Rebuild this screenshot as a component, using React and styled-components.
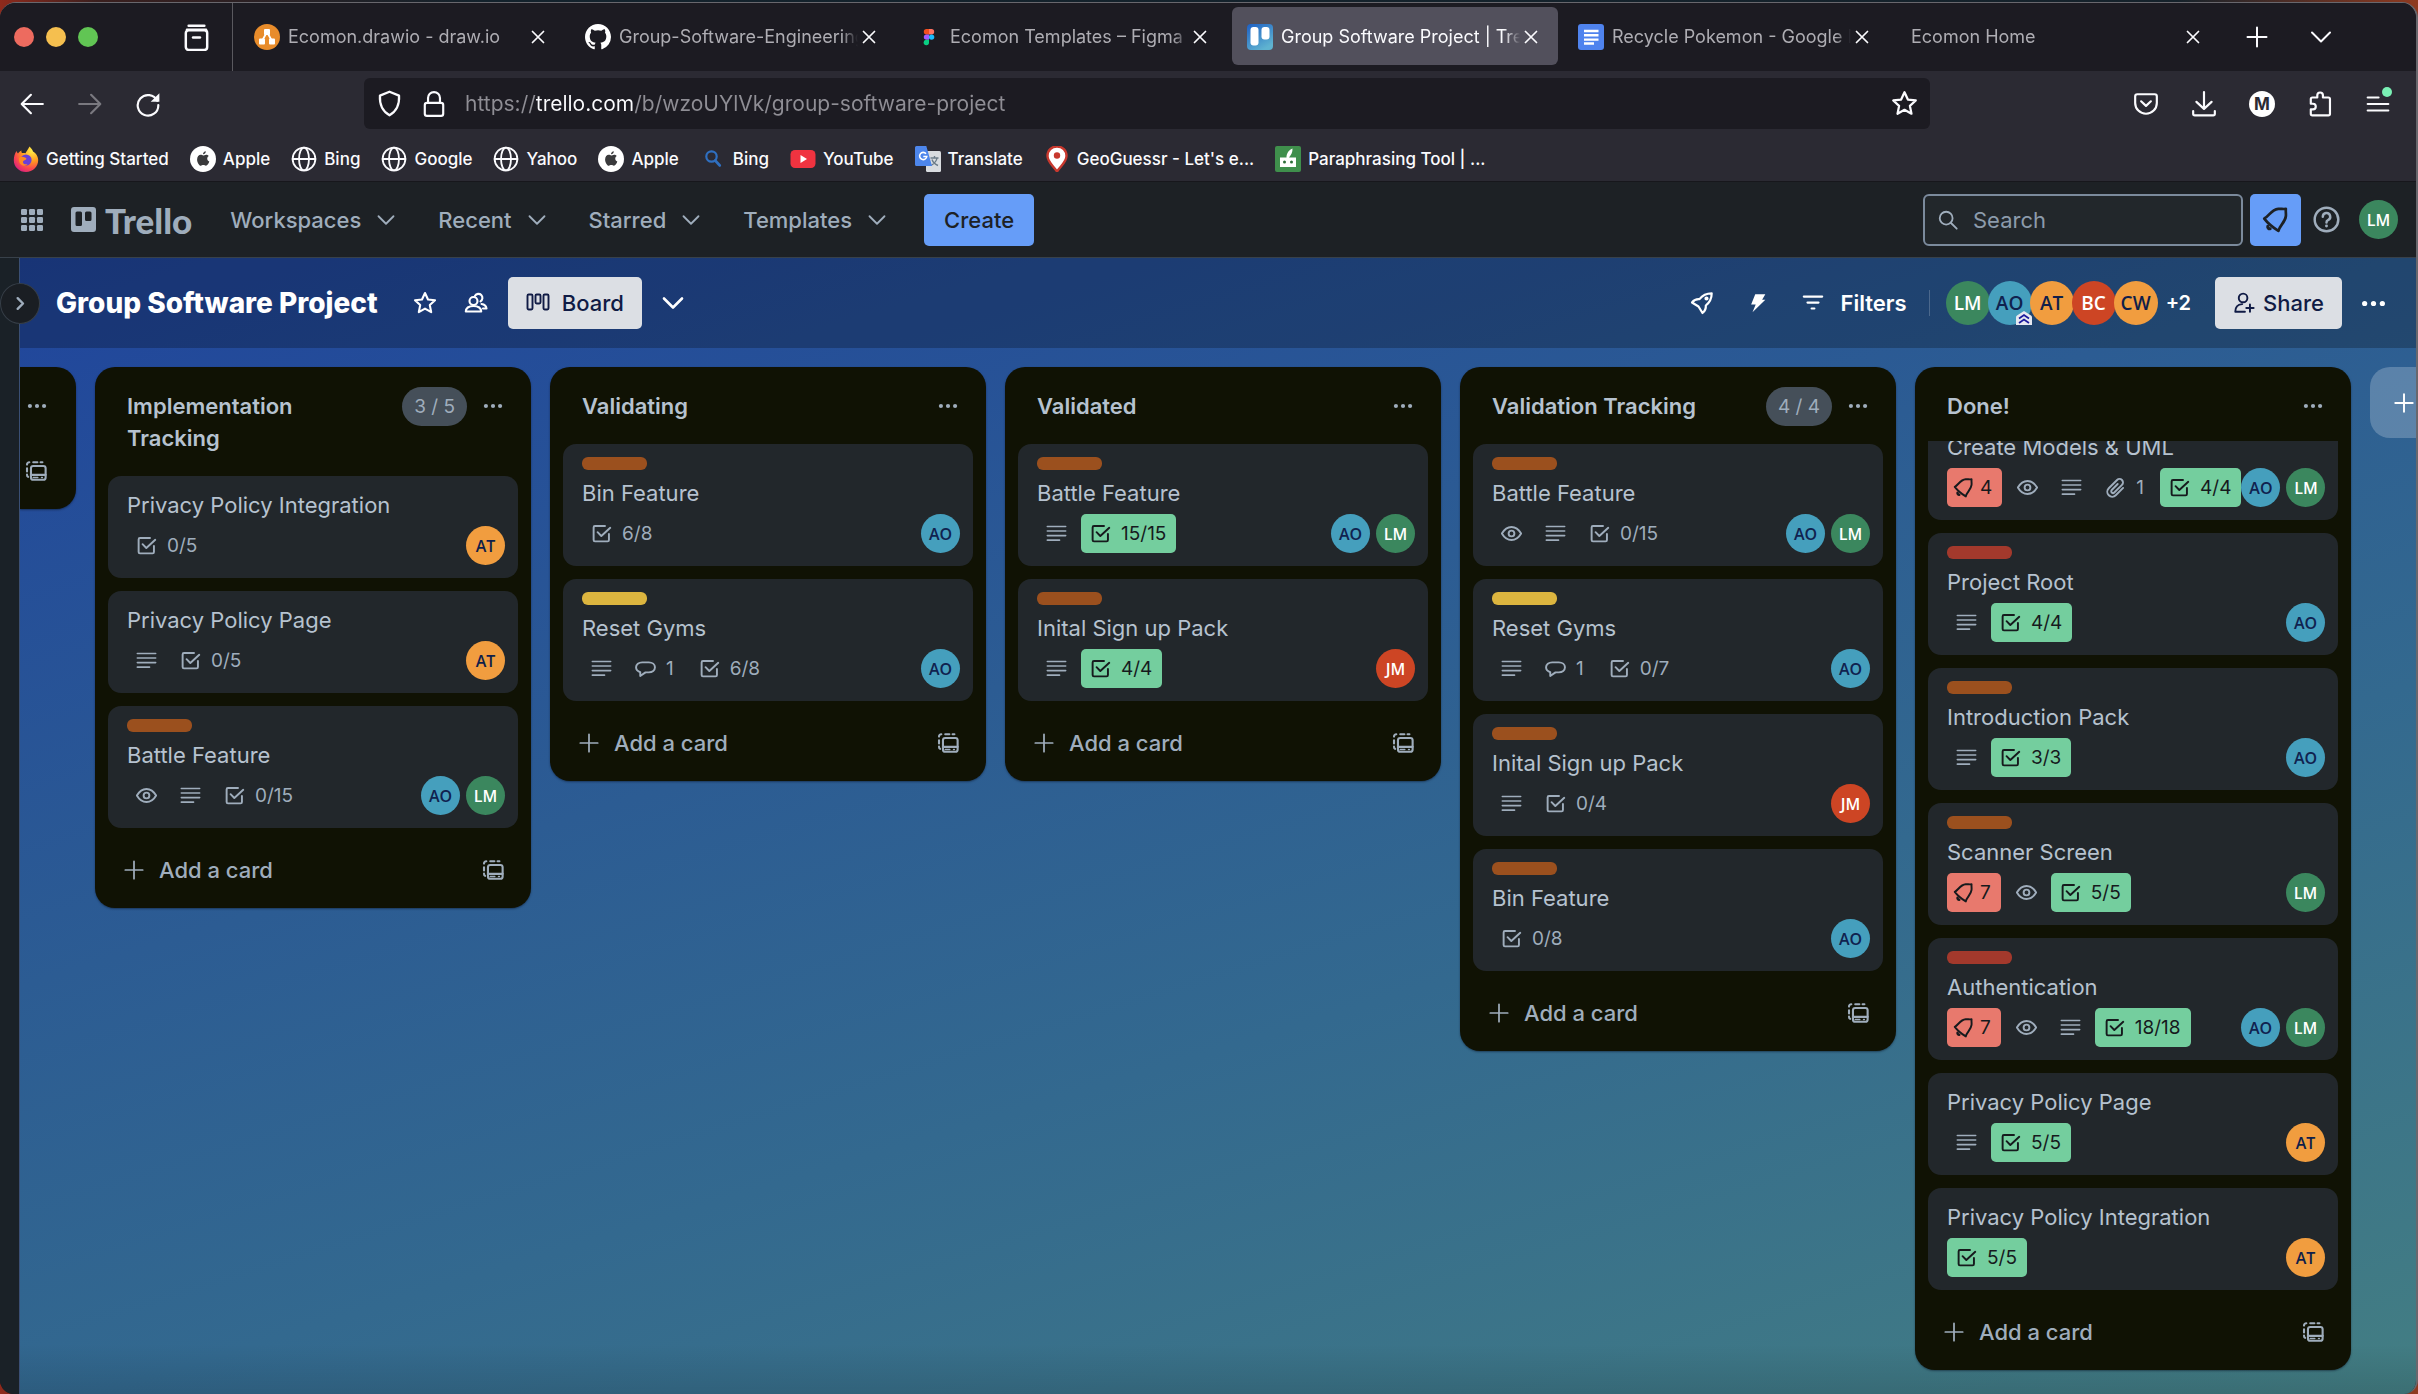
import React, { useLayoutEffect, useRef } from "react";
import styled, { createGlobalStyle, css } from "styled-components";

const GlobalStyle = createGlobalStyle`
  *, *::before, *::after { box-sizing: border-box; }
  body { margin: 0; background: #15222b; }
  button, input { font: inherit; color: inherit; }
  button { background: none; border: 0; padding: 0; cursor: pointer; }
  h1, h2, h3 { margin: 0; }
  svg { display: block; flex: none; }
`;

/* ---------- drawings ---------- */

const shapes = {
  archive: (
    <>
      <path d="M5 1.5h14M3.5 5h17" />
      <rect x="2.5" y="5.5" width="19" height="17.5" rx="2.5" />
      <path d="M9 12h6" strokeWidth="2.4" />
    </>
  ),
  close: <path d="M6 6l12 12M18 6L6 18" />,
  plus: <path d="M12 2.5v19M2.5 12h19" />,
  chevron: <path d="M3 7.5l9 9 9-9" />,
  chevronRight: <path d="M8 4.5l7.5 7.5L8 19.5" />,
  back: <path d="M22 12H3M11 3.5L2.5 12l8.500 8.500" />,
  forward: <path d="M2 12h19M13 3.500L21.500 12 13 20.500" />,
  reload: (
    <>
      <path d="M20.500 9A9.500 9.500 0 1 0 21.500 13" />
      <path d="M22.500 2v8h-8z" fill="currentColor" stroke="none" />
    </>
  ),
  shield: <path d="M12 1.500L20.500 5c.4 7-1.500 13.500-8.500 17.500C5 18.500 3.100 12 3.500 5z" />,
  lock: (
    <>
      <rect x="3.500" y="11" width="17" height="12" rx="2" />
      <path d="M6.500 11V6.500a5.500 5.500 0 0 1 11 0V11" />
    </>
  ),
  star: <path d="M12 2l3 6.500 7 .8-5.200 4.800 1.400 7L12 17.600 5.800 21.100l1.400-7L2 9.300l7-.8z" />,
  pocket: (
    <>
      <path d="M4 3h16a2 2 0 0 1 2 2v6a10 10 0 0 1-20 0V5a2 2 0 0 1 2-2z" />
      <path d="M7.500 9.500l4.500 4.200 4.500-4.200" />
    </>
  ),
  download: <path d="M12 1v15M5 10l7 6.500L19 10M2 18.500V21a1.500 1.500 0 0 0 1.500 1.500h17A1.500 1.500 0 0 0 22 21v-2.500" />,
  puzzle: (
    <path d="M9.500 6V4a2.600 2.600 0 0 1 5.200 0v2h5a1.500 1.500 0 0 1 1.500 1.500V21a1.500 1.500 0 0 1-1.500 1.500H5A1.500 1.500 0 0 1 3.500 21v-4h2a2.600 2.600 0 0 0 0-5.200h-2V7.500A1.500 1.500 0 0 1 5 6z" />
  ),
  menu: <path d="M2.500 6h10M2.500 12h19M2.500 18h19" />,
  search: (
    <>
      <circle cx="10" cy="10" r="7" />
      <path d="M15 15l6.500 6.500" />
    </>
  ),
  bell: (
    <>
      <path d="M2 11.200C6 9.500 8 3.200 14.500 2.600c2.200-.2 4.300.3 6.700 0-.3 2.300.3 4.300 0 6.500C20.600 14.500 15.800 17 14.600 22.200 10.500 19.500 5.500 15.800 2 11.200z" />
      <path d="M5.200 18a1.800 1.800 0 0 0 2 2.200" strokeWidth="2.800" />
    </>
  ),
  help: (
    <>
      <circle cx="12" cy="12" r="10.500" />
      <path d="M8.700 9.500a3.300 3.300 0 1 1 4.600 3.100c-.9.400-1.300.9-1.300 2" />
      <circle cx="12" cy="17.700" r="1.300" fill="currentColor" stroke="none" />
    </>
  ),
  people: (
    <>
      <circle cx="9.500" cy="10" r="4" />
      <path d="M1.800 20.500c.3-4 3.500-5.500 7.700-5.500s7.400 1.500 7.700 5.500z" />
      <path d="M11 4.800a4 4 0 1 1 5.500 5.500M17.500 13c3 .4 4.700 1.800 5 4.500h-3.500" />
    </>
  ),
  board: (
    <>
      <rect x="1.500" y="3.500" width="5" height="15" rx="1.200" />
      <rect x="9.500" y="3.500" width="5" height="9" rx="1.200" />
      <rect x="17.500" y="3.500" width="5" height="15" rx="1.200" />
    </>
  ),
  rocket: (
    <>
      <path d="M8.500 15.500L2 11.500c2-2.500 4.500-3.600 7.500-3.300C12.500 4.300 16.500 2.300 21.700 2.300c0 5.200-2 9.200-5.900 12.200.3 3-.8 5.500-3.300 7.500z" />
      <circle cx="16.500" cy="7.500" r="1" />
    </>
  ),
  bolt: <path d="M9 2.500h11l-3.500 6h3.500L6 22l3.500-8.500H4.500z" fill="currentColor" stroke="none" />,
  filter: <path d="M2 5h20M6 11.500h12M10.500 18h3" />,
  dots: (
    <g fill="currentColor" stroke="none">
      <circle cx="3.500" cy="12" r="2.500" />
      <circle cx="12" cy="12" r="2.500" />
      <circle cx="20.500" cy="12" r="2.500" />
    </g>
  ),
  check: (
    <>
      <path d="M16 3.500H4.500a1.500 1.500 0 0 0-1.500 1.500v14.500A1.500 1.500 0 0 0 4.500 21h14.500a1.500 1.500 0 0 0 1.500-1.500V12.500" />
      <path d="M7.500 10.500l4.300 4.300L22 5.500" />
    </>
  ),
  text: <path d="M1.500 4h21M1.500 9.200h21M1.500 14.400h21M1.500 19.600h14" />,
  eye: (
    <>
      <path d="M1 12C4 6.800 7.500 4.500 12 4.500S20 6.800 23 12c-3 5.200-6.500 7.500-11 7.500S4 17.200 1 12z" />
      <circle cx="12" cy="12" r="3.300" />
    </>
  ),
  comment: (
    <path d="M6 20.500v-4.200C3 15.300 1.200 13.300 1.200 10.700c0-3.400 3-5.700 7-5.700h7.600c4 0 7 2.300 7 5.700s-3 5.700-7 5.700H12z" />
  ),
  clip: (
    <path d="M14.500 8l-6.800 6.800a2 2 0 0 0 2.900 2.900l8.800-8.700a3.900 3.900 0 0 0-5.600-5.600L4.300 12.900a5.600 5.600 0 0 0 8 8l8.400-8.400" />
  ),
  template: (
    <>
      <rect x="6.500" y="6.500" width="16" height="15" rx="2.500" strokeWidth="2.300" />
      <path d="M6.500 16.200h16" strokeWidth="2.300" />
      <path d="M9 19.200h5M18 19.200h1" strokeWidth="1.600" />
      <path d="M9 2.500h4.500M17 2.500h2M2.200 5C2.200 3.500 3.200 2.500 4.700 2.500M2.200 9v3.500M2.200 16c0 1.300.4 2 1.200 2.400" strokeWidth="2.300" />
    </>
  ),
  personAdd: (
    <>
      <circle cx="11" cy="6.500" r="4.700" />
      <path d="M13 21.500H2.500C2.500 16 5.500 13.500 10 13.200M18.500 13.500v8M14.500 17.500h8" />
    </>
  ),
  globe: (
    <>
      <circle cx="12" cy="12" r="10.500" />
      <ellipse cx="12" cy="12" rx="4.600" ry="10.500" />
      <path d="M1.500 12h21" />
    </>
  ),
};

function Icon({ name, size = 24, weight = 2, color }) {
  return (
    <svg
      width={size}
      height={size}
      viewBox="0 0 24 24"
      fill="none"
      stroke="currentColor"
      strokeWidth={weight}
      strokeLinecap="round"
      strokeLinejoin="round"
      color={color}
      aria-hidden="true"
    >
      {shapes[name]}
    </svg>
  );
}

const Logo = ({ children, size = 26 }) => (
  <svg width={size} height={size} viewBox="0 0 26 26" aria-hidden="true">
    {children}
  </svg>
);

const logos = {
  drawio: (
    <Logo>
      <circle cx="13" cy="13" r="13" fill="#e88c2b" />
      <path d="M13 8L8 17M13 8l5 9" stroke="#fff" strokeWidth="1.800" />
      <rect x="10" y="5" width="6" height="6" rx="1" fill="#fff" />
      <rect x="5" y="14.500" width="6" height="6" rx="1" fill="#fff" />
      <rect x="15" y="14.500" width="6" height="6" rx="1" fill="#fff" />
    </Logo>
  ),
  github: (
    <svg width="26" height="26" viewBox="0 0 16 16" fill="#fff" aria-hidden="true">
      <path d="M8 0C3.580 0 0 3.580 0 8c0 3.540 2.290 6.530 5.470 7.590.4.070.55-.17.55-.38 0-.19-.01-.82-.01-1.490-2.010.37-2.530-.49-2.690-.94-.09-.23-.48-.94-.82-1.130-.28-.15-.68-.52-.01-.53.63-.01 1.080.58 1.230.82.72 1.210 1.870.87 2.330.66.070-.52.28-.87.51-1.070-1.780-.2-3.640-.89-3.640-3.950 0-.87.31-1.590.82-2.150-.08-.2-.36-1.020.08-2.120 0 0 .67-.21 2.200.82a7.600 7.600 0 0 1 4 0c1.530-1.040 2.200-.82 2.200-.82.44 1.100.16 1.920.08 2.120.51.56.82 1.270.82 2.150 0 3.070-1.870 3.750-3.650 3.950.29.25.54.73.54 1.480 0 1.070-.01 1.930-.01 2.200 0 .21.15.46.55.38A8 8 0 0 0 16 8c0-4.420-3.580-8-8-8z" />
    </svg>
  ),
  figma: (
    <Logo>
      <path d="M10.500 5H13v5.400h-2.500a2.700 2.700 0 0 1 0-5.400z" fill="#f24e1e" />
      <path d="M13 5h2.500a2.700 2.700 0 0 1 0 5.400H13z" fill="#ff7262" />
      <path d="M10.500 10.400H13v5.400h-2.500a2.700 2.700 0 0 1 0-5.400z" fill="#a259ff" />
      <circle cx="15.600" cy="13.100" r="2.700" fill="#1abcfe" />
      <path d="M10.500 15.800H13v2.700a2.700 2.700 0 1 1-2.500-2.700z" fill="#0acf83" />
    </Logo>
  ),
  trello: (
    <Logo>
      <defs>
        <linearGradient id="trelloTile" x1="0" y1="0" x2="0.600" y2="1">
          <stop offset="0" stopColor="#1d5fc4" />
          <stop offset="1" stopColor="#5fb3d0" />
        </linearGradient>
      </defs>
      <rect width="26" height="26" rx="4" fill="url(#trelloTile)" />
      <rect x="3.500" y="3" width="8" height="18.500" rx="3" fill="#fff" />
      <rect x="14.500" y="3" width="8" height="12.500" rx="3" fill="#fff" />
    </Logo>
  ),
  docs: (
    <Logo>
      <rect width="26" height="26" rx="3" fill="#4f83ee" />
      <path d="M6 7h14.500M6 11.300h14.500M6 15.600h14.500M6 19.500h10" stroke="#fff" strokeWidth="2.400" />
    </Logo>
  ),
  firefox: (
    <Logo>
      <defs>
        <radialGradient id="fox" cx="0.750" cy="0.150" r="0.950">
          <stop offset="0" stopColor="#fff14a" />
          <stop offset="0.450" stopColor="#ff9a1f" />
          <stop offset="0.750" stopColor="#fb4a4b" />
          <stop offset="1" stopColor="#d9217f" />
        </radialGradient>
      </defs>
      <path d="M16.500.5c2.200 2 3 3.400 3.500 5 3 1.500 5.200 5 5.200 8.500C25.200 20.800 19.800 26 13 26S.8 20.800.8 14.200c0-3.500 1-6.500 2.700-9.200.4 1.200.9 2 1.500 2.500C6 6 7 5 8.500 4.500c-.3 1 0 2 .5 2.500 1.200-.2 2.500 0 3.500.3C13.500 5 15 3.500 16.500.5z" fill="url(#fox)" />
      <circle cx="13" cy="14" r="5.600" fill="#6a3fd6" />
      <path d="M6 12c2.500-2 4-1 6-.6 1.500.3 2 1.600.6 2.300-1.600.8-2.600.8-2.600 2.300 0 1.600 2 3 4.500 2-2.500 3.500-9.500 1.500-8.500-6z" fill="#ff8a22" />
    </Logo>
  ),
  apple: (
    <Logo>
      <circle cx="13" cy="13" r="13" fill="#fff" />
      <path d="M15.800 5.200c.1 1.700-1.300 3.100-2.800 3.100-.1-1.600 1.300-3 2.800-3.100zM13.200 9.500c.7 0 1.600-.8 2.900-.8 1 0 2 .5 2.700 1.400-2.300 1.400-1.900 4.600.5 5.500-.6 1.800-1.900 4.100-3.400 4.100-1 0-1.400-.6-2.600-.6s-1.600.6-2.500.6c-1.600 0-3.700-3.300-3.700-6.300 0-2.900 1.800-4.600 3.600-4.600 1.100 0 1.900.7 2.500.7z" fill="#3a3a3c" />
    </Logo>
  ),
  globe: <Icon name="globe" size={26} weight={1.700} />,
  bing: (
    <Logo>
      <circle cx="11.500" cy="10.500" r="5.200" fill="none" stroke="#2f6fc0" strokeWidth="2.200" />
      <path d="M15.200 14.500l4.600 5" stroke="#2f6fc0" strokeWidth="2.600" strokeLinecap="round" />
    </Logo>
  ),
  youtube: (
    <Logo>
      <rect x="0.500" y="4" width="25" height="18" rx="4.500" fill="#f03340" />
      <path d="M10.500 9l6.500 4-6.500 4z" fill="#fff" />
    </Logo>
  ),
  translate: (
    <Logo>
      <rect x="11" y="5" width="15" height="21" rx="1.500" fill="#d9dce0" />
      <path d="M15.500 12h8M19.500 10v2M22 12c-.5 3.500-3.500 6-6 7.500M17 13.500c1 3 3.500 5 6 6" stroke="#6d7d8a" strokeWidth="1.400" fill="none" />
      <path d="M1.500 0h9.800L17 20H1.500A1.500 1.500 0 0 1 0 18.500v-17A1.500 1.500 0 0 1 1.500 0z" fill="#4d86ec" />
      <path d="M11 7.700a3.600 3.600 0 1 0 .8 2.800H8.300" stroke="#fff" strokeWidth="1.600" fill="none" />
    </Logo>
  ),
  geo: (
    <Logo>
      <path d="M13 .5c5.500 0 9.500 4 9.500 9.500C22.500 16 16.500 20 13 25.500 9.500 20 3.500 16 3.500 10 3.500 4.500 7.500.5 13 .5z" fill="#fff" stroke="#c8382e" strokeWidth="2.400" />
      <circle cx="13" cy="9.500" r="3.200" fill="#c8382e" />
    </Logo>
  ),
  quill: (
    <Logo>
      <rect width="26" height="26" rx="2" fill="#3f8f4c" />
      <path d="M5 11.500h6.500C11.500 8 13 4.500 17.500 2.500c.3 3.500-1.500 6.500-3.500 9h7V21H5z" fill="#fff" />
      <circle cx="9.500" cy="16" r="1.500" fill="#2d6e38" />
      <circle cx="16.500" cy="16" r="1.500" fill="#2d6e38" />
    </Logo>
  ),
};

/* ---------- browser window ---------- */

const Desktop = styled.div`
  height: 100vh;
  padding-top: 2px;
  background: linear-gradient(90deg, #8f2a1c 0, #3a1f1e 4%, #13222c 20%, #15222b 90%, #8f3a20 100%);
  font-family: Inter, "Liberation Sans", sans-serif;
  -webkit-font-smoothing: antialiased;
`;

const Window = styled.div`
  height: 100%;
  display: flex;
  flex-direction: column;
  overflow: hidden;
  border: solid #68676d;
  border-width: 1px 2px 0 0;
  border-radius: 16px 16px 14px 14px;
  background: #1c1b22;
`;

const TabStrip = styled.div`
  display: flex;
  height: 68px;
  flex: none;
  background: #1c1b22;
  color: #fbfbfe;
`;

const WindowControls = styled.div`
  width: 233px;
  flex: none;
  display: flex;
  align-items: center;
  gap: 12px;
  padding: 0 22px 0 14px;
  border-right: 1px solid #5a595f;
`;

const Light = styled.button`
  width: 20px;
  height: 20px;
  border-radius: 50%;
  background: ${(p) => p.$color};
`;

const IconButton = styled.button`
  display: grid;
  place-items: center;
  flex: none;
  color: ${(p) => p.$color || "inherit"};
  margin-left: ${(p) => (p.$push ? "auto" : 0)};
`;

const Tabs = styled.div`
  display: flex;
  gap: 5px;
  min-width: 0;
  padding: 4px 0 6px 6px;
`;

const Tab = styled.div`
  flex: 0 1 326px;
  width: 326px;
  min-width: 0;
  display: flex;
  align-items: center;
  gap: 8px;
  padding: 2px 16px 0 15px;
  border-radius: 6px;
  color: ${(p) => (p.$active ? "#fbfbfe" : "#aeadb3")};
  background: ${(p) => (p.$active ? "#52505c" : "transparent")};
`;

const TabTitle = styled.button`
  flex: 1;
  min-width: 0;
  overflow: hidden;
  white-space: nowrap;
  text-align: left;
  font-size: 18px;
  line-height: 28px;
  margin-left: ${(p) => (p.$bare ? "2px" : 0)};
  margin-right: -8px;
  mask-image: linear-gradient(to right, #000 calc(100% - 16px), transparent);
`;

const TabActions = styled.div`
  display: flex;
  align-items: center;
  gap: 40px;
  padding-left: 25px;
`;

const Toolbar = styled.div`
  display: flex;
  align-items: center;
  flex: none;
  gap: 32px;
  padding: 7px 25px 7px 19px;
  background: #2b2a33;
  color: #fbfbfe;
`;

const Spring = styled.div`
  flex: 1 1 0;
  margin: 0 -16px;
`;

const UrlBar = styled.label`
  flex: 0 1 1566px;
  min-width: 0;
  height: 51px;
  display: flex;
  align-items: center;
  gap: 18px;
  padding: 0 12px;
  border-radius: 6px;
  background: #1c1b22;
`;

const UrlInput = styled.input`
  flex: 1;
  min-width: 0;
  border: 0;
  outline: 0;
  padding: 0;
  font-size: 21px;
  line-height: 30px;
  color: transparent;
  background: linear-gradient(90deg, #8f8e95 71px, #fbfbfe 71px 169px, #8f8e95 169px);
  background-clip: text;
`;

const AccountDot = styled.span`
  display: grid;
  place-items: center;
  width: 26px;
  height: 26px;
  border-radius: 50%;
  background: #fff;
  color: #2b2a33;
  font-size: 17px;
  font-weight: 700;
`;

const MenuButton = styled(IconButton)`
  position: relative;
  &::after {
    content: "";
    position: absolute;
    right: -1px;
    top: -4px;
    width: 10px;
    height: 10px;
    border-radius: 50%;
    background: #7af0b5;
  }
`;

const Bookmarks = styled.nav`
  display: flex;
  align-items: center;
  flex: none;
  gap: 21px;
  height: 45px;
  padding: 0 13px;
  background: #2b2a33;
`;

const Bookmark = styled.a`
  display: flex;
  align-items: center;
  gap: 7px;
  color: #fbfbfe;
  font-size: 17px;
  line-height: 26px;
  font-weight: 500;
  text-decoration: none;
  white-space: nowrap;
`;

/* ---------- Trello header ---------- */

const AppHeader = styled.header`
  display: flex;
  align-items: center;
  flex: none;
  height: 77px;
  padding: 0 18px 0 21px;
  background: #1d2125;
  border-top: 1px solid #17171c;
  border-bottom: 1px solid #38414a;
  color: #9fadbc;
`;

const Brand = styled.a`
  display: flex;
  align-items: center;
  gap: 9px;
  margin: 0 38px 0 28px;
  color: inherit;
  text-decoration: none;
  font-family: Lato, "Open Sans", sans-serif;
  font-size: 35px;
  line-height: 40px;
  font-weight: 900;
`;

const HeaderNav = styled.nav`
  display: flex;
  gap: 42px;
  margin-right: 37px;
`;

const NavButton = styled.button`
  display: flex;
  align-items: center;
  gap: 15px;
  font-size: 22px;
  line-height: 32px;
  font-weight: 500;
`;

const CreateButton = styled.button`
  height: 52px;
  padding: 0 20px;
  border-radius: 5px;
  background: #669df8;
  color: #1d2125;
  font-size: 22px;
  font-weight: 500;
`;

const SearchBox = styled.label`
  display: flex;
  align-items: center;
  gap: 14px;
  flex: 0 1 320px;
  min-width: 0;
  height: 52px;
  margin: 0 7px 0 auto;
  padding: 0 12px;
  border: 2px solid #7b8a9c;
  border-radius: 6px;
  background: #22272b;
`;

const SearchInput = styled.input`
  flex: 1;
  width: 100%;
  min-width: 0;
  border: 0;
  outline: 0;
  padding: 0;
  background: none;
  font-size: 22px;
  line-height: 32px;
  &::placeholder { color: #8c9bab; opacity: 1; }
`;

const BellButton = styled(IconButton)`
  width: 51px;
  height: 52px;
  margin-right: 12px;
  border-radius: 5px;
  background: #669df8;
  color: #1d2125;
`;

const HelpButton = styled(IconButton)`
  margin-right: 19px;
`;

const avatarTones = {
  LM: ["#3b875e", "#ffffff"],
  AO: ["#459fbd", "#10224f"],
  AT: ["#f19d3f", "#101f4a"],
  CW: ["#f19d3f", "#101f4a"],
  BC: ["#cd4524", "#ffffff"],
  JM: ["#cd4524", "#ffffff"],
};

const Avatar = styled.button`
  display: grid;
  place-items: center;
  flex: none;
  position: relative;
  width: ${(p) => (p.$large ? 44 : 39)}px;
  height: ${(p) => (p.$large ? 44 : 39)}px;
  border-radius: 50%;
  background: ${(p) => avatarTones[p.$who][0]};
  color: ${(p) => avatarTones[p.$who][1]};
  font-family: "Open Sans", Inter, sans-serif;
  font-size: ${(p) => (p.$large ? 19 : 16)}px;
  font-weight: 600;
`;

/* ---------- board ---------- */

const Workspace = styled.div`
  flex: 1;
  min-height: 0;
  display: flex;
`;

const Rail = styled.aside`
  position: relative;
  z-index: 1;
  width: 20px;
  flex: none;
  background: #1a2127;
  border-right: 1px solid #3a4f74;
`;

const RailToggle = styled.button`
  position: absolute;
  left: 0;
  top: 25px;
  width: 40px;
  height: 41px;
  display: grid;
  place-items: center;
  border: 1px solid #363e47;
  border-radius: 50%;
  background: #1a1e23;
  color: #9fadbc;
`;

const Board = styled.main`
  flex: 1;
  min-width: 0;
  display: flex;
  flex-direction: column;
  background:
    linear-gradient(to top, rgba(0, 0, 0, 0.12), transparent 50px),
    linear-gradient(163deg, #20459c 0%, #2c5c93 39%, #33698f 62%, #437e83 100%);
`;

const BoardHeader = styled.div`
  display: flex;
  align-items: center;
  flex: none;
  height: 90px;
  padding: 0 30px 0 36px;
  background: rgba(0, 0, 0, 0.24);
  color: #fff;
`;

const BoardTitle = styled.h1`
  font-size: 28px;
  line-height: 40px;
  font-weight: 800;
  white-space: nowrap;
`;

const TitleTools = styled.div`
  display: flex;
  gap: 27px;
  margin: 0 20px 0 35px;
`;

const SolidButton = styled.button`
  display: flex;
  align-items: center;
  flex: none;
  gap: ${(p) => p.$gap}px;
  height: 52px;
  padding: 0 18px;
  margin-right: 19px;
  border-radius: 5px;
  background: #dcdfe4;
  color: #101b45;
  font-size: 22px;
  font-weight: 500;
`;

const HeaderTools = styled.div`
  display: flex;
  align-items: center;
  gap: 33px;
  margin-left: auto;
  padding-right: 22px;
`;

const FilterButton = styled.button`
  display: flex;
  align-items: center;
  gap: 16px;
  font-size: 22px;
  line-height: 32px;
  font-weight: 600;
`;

const Members = styled.div`
  display: flex;
  align-items: center;
  padding-left: 16px;
  margin-right: 24px;
  font-size: 20px;
  font-weight: 600;
  ${Avatar} { margin-right: -2px; }
`;

const Divider = styled.div`
  width: 1px;
  height: 26px;
  background: rgba(255, 255, 255, 0.2);
`;

const MoreMembers = styled.button`
  margin-left: 10px;
`;

const AdminMark = styled.svg`
  position: absolute;
  right: 0;
  bottom: 0;
`;

const Lists = styled.div`
  flex: 1;
  min-height: 0;
  display: flex;
  align-items: flex-start;
  gap: 19px;
  padding: 19px 0 24px;
  overflow: hidden;
`;

const List = styled.section`
  display: flex;
  flex-direction: column;
  flex: none;
  width: ${(p) => (p.$cut ? 56 : 436)}px;
  max-height: 100%;
  border-radius: ${(p) => (p.$cut ? "0 20px 20px 0" : "20px")};
  background: #101204;
  color: #b6c2cf;
  box-shadow: 0 1px 2px rgba(9, 20, 40, 0.5);
`;

const ListHeader = styled.div`
  display: flex;
  align-items: flex-start;
  flex: none;
  padding: 23px 26px 19px ${(p) => (p.$cut ? 5 : 32)}px;
  color: #9fadbc;
`;

const ListTitle = styled.h2`
  flex: 1;
  min-width: 0;
  color: #b6c2cf;
  font-size: 22px;
  line-height: 32px;
  font-weight: 600;
`;

const Limit = styled.span`
  flex: none;
  margin: -3px 14px -4px 24px;
  padding: 0 12px;
  border-radius: 20px;
  background: #454f59;
  color: #9fadbc;
  font-size: 19px;
  line-height: 39px;
`;

const ListMenu = styled(IconButton)`
  width: 24px;
  height: 32px;
`;

const Cards = styled.div`
  flex: 0 1 auto;
  min-height: 0;
  display: flex;
  flex-direction: column;
  gap: 13px;
  padding: 3px 13px 12px;
  overflow-y: auto;
  scrollbar-width: none;
`;

const CardBox = styled.article`
  flex: none;
  padding: 13px 13px 13px 19px;
  border-radius: 13px;
  background: #22272b;
`;

const labelTones = { orange: "#9b501e", yellow: "#dcb53f", red: "#a3392c" };

const Label = styled.div`
  width: 65px;
  height: 13px;
  margin-bottom: 7px;
  border-radius: 6px;
  background: ${(p) => labelTones[p.$tone]};
`;

const CardTitle = styled.h3`
  font-size: 22px;
  line-height: 32px;
  font-weight: 400;
`;

const CardFooter = styled.div`
  display: flex;
  justify-content: space-between;
  height: 39px;
  margin-top: 5px;
`;

const BadgeRow = styled.div`
  display: flex;
  gap: 6px;
  color: #9fadbc;
`;

const People = styled.div`
  display: flex;
  gap: 6px;
`;

const badgeTones = {
  done: css`
    background: #74ce9e;
    color: #161a1d;
  `,
  alert: css`
    background: #e8796d;
    color: #161a1d;
    padding-left: 6px;
  `,
};

const BadgeBox = styled.span`
  display: flex;
  align-items: center;
  gap: ${(p) => (p.$tone === "alert" ? 6 : 10)}px;
  height: 39px;
  padding: 0 ${(p) => (p.$text ? 10 : 8)}px 0 9px;
  border-radius: 5px;
  font-size: 19px;
  white-space: nowrap;
  ${(p) => badgeTones[p.$tone]}
`;

const ListFooter = styled.div`
  display: flex;
  align-items: center;
  flex: none;
  height: 68px;
  padding: 0 27px 8px ${(p) => (p.$cut ? 5 : 28)}px;
  color: #9fadbc;
`;

const AddCard = styled.button`
  flex: 1;
  display: flex;
  align-items: center;
  gap: 14px;
  font-size: 22px;
  line-height: 32px;
  font-weight: 500;
`;

const AddList = styled.button`
  flex: none;
  width: 436px;
  height: 71px;
  padding-left: 23px;
  border-radius: 20px;
  background: rgba(255, 255, 255, 0.22);
  color: #fff;
`;

/* ---------- content ---------- */

const tabs = [
  { icon: "drawio", title: "Ecomon.drawio - draw.io" },
  { icon: "github", title: "Group-Software-Engineering" },
  { icon: "figma", title: "Ecomon Templates – Figma" },
  { icon: "trello", title: "Group Software Project | Trello", active: true },
  { icon: "docs", title: "Recycle Pokemon - Google Docs" },
  { title: "Ecomon Home" },
];

const bookmarks = [
  ["firefox", "Getting Started"],
  ["apple", "Apple"],
  ["globe", "Bing"],
  ["globe", "Google"],
  ["globe", "Yahoo"],
  ["apple", "Apple"],
  ["bing", "Bing"],
  ["youtube", "YouTube"],
  ["translate", "Translate"],
  ["geo", "GeoGuessr - Let's e..."],
  ["quill", "Paraphrasing Tool | ..."],
];

const text = ["text"];
const eye = ["eye"];
const todo = (n) => ["check", n];
const done = (n) => ["check", n, "done"];
const alert = (n) => ["bell", n, "alert"];
const card = (title, label, badges, people) => ({ title, label, badges, people });

const lists = [
  {
    title: "Implementation Tracking",
    limit: "3 / 5",
    cards: [
      card("Privacy Policy Integration", null, [todo("0/5")], ["AT"]),
      card("Privacy Policy Page", null, [text, todo("0/5")], ["AT"]),
      card("Battle Feature", "orange", [eye, text, todo("0/15")], ["AO", "LM"]),
    ],
  },
  {
    title: "Validating",
    cards: [
      card("Bin Feature", "orange", [todo("6/8")], ["AO"]),
      card("Reset Gyms", "yellow", [text, ["comment", "1"], todo("6/8")], ["AO"]),
    ],
  },
  {
    title: "Validated",
    cards: [
      card("Battle Feature", "orange", [text, done("15/15")], ["AO", "LM"]),
      card("Inital Sign up Pack", "orange", [text, done("4/4")], ["JM"]),
    ],
  },
  {
    title: "Validation Tracking",
    limit: "4 / 4",
    cards: [
      card("Battle Feature", "orange", [eye, text, todo("0/15")], ["AO", "LM"]),
      card("Reset Gyms", "yellow", [text, ["comment", "1"], todo("0/7")], ["AO"]),
      card("Inital Sign up Pack", "orange", [text, todo("0/4")], ["JM"]),
      card("Bin Feature", "orange", [todo("0/8")], ["AO"]),
    ],
  },
  {
    title: "Done!",
    cards: [
      card("Create Models & UML", "orange", [alert("4"), eye, text, ["clip", "1"], done("4/4")], ["AO", "LM"]),
      card("Project Root", "red", [text, done("4/4")], ["AO"]),
      card("Introduction Pack", "orange", [text, done("3/3")], ["AO"]),
      card("Scanner Screen", "orange", [alert("7"), eye, done("5/5")], ["LM"]),
      card("Authentication", "red", [alert("7"), eye, text, done("18/18")], ["AO", "LM"]),
      card("Privacy Policy Page", null, [text, done("5/5")], ["AT"]),
      card("Privacy Policy Integration", null, [done("5/5")], ["AT"]),
    ],
  },
];

/* ---------- parts ---------- */

const Badge = ({ icon, value, tone }) => (
  <BadgeBox $tone={tone} $text={Boolean(value)}>
    <Icon name={icon} size={21} weight={icon === "text" ? 1.8 : 2.2} />
    {value}
  </BadgeBox>
);

const Card = ({ title, label, badges, people }) => (
  <CardBox>
    {label && <Label $tone={label} />}
    <CardTitle>{title}</CardTitle>
    <CardFooter>
      <BadgeRow>
        {badges.map(([icon, value, tone]) => (
          <Badge key={icon} icon={icon} value={value} tone={tone} />
        ))}
      </BadgeRow>
      <People>
        {people.map((p) => (
          <Avatar key={p} $who={p}>{p}</Avatar>
        ))}
      </People>
    </CardFooter>
  </CardBox>
);

function BoardList({ title, limit, cards = [], cut }) {
  const scroller = useRef(null);

  // Long lists open at their newest cards.
  useLayoutEffect(() => {
    if (scroller.current) scroller.current.scrollTop = scroller.current.scrollHeight;
  }, []);

  return (
    <List $cut={cut}>
      <ListHeader $cut={cut}>
        {title && <ListTitle>{title}</ListTitle>}
        {limit && <Limit>{limit}</Limit>}
        <ListMenu aria-label="List actions"><Icon name="dots" size={20} /></ListMenu>
      </ListHeader>
      {cards.length > 0 && (
        <Cards ref={scroller}>
          {cards.map((c) => <Card key={c.title} {...c} />)}
        </Cards>
      )}
      <ListFooter $cut={cut}>
        {!cut && <AddCard><Icon name="plus" size={22} weight={1.9} />Add a card</AddCard>}
        <IconButton aria-label="Create from template"><Icon name="template" size={22} weight={1.8} /></IconButton>
      </ListFooter>
    </List>
  );
}

export default function App() {
  return (
    <Desktop>
      <GlobalStyle />
      <Window>
        <TabStrip>
          <WindowControls>
            <Light $color="#ed6b5f" aria-label="Close window" />
            <Light $color="#f5bf4f" aria-label="Minimise window" />
            <Light $color="#61c554" aria-label="Zoom window" />
            <IconButton $push aria-label="Recent browsing"><Icon name="archive" size={27} weight={2.2} /></IconButton>
          </WindowControls>
          <Tabs>
            {tabs.map((t) => (
              <Tab key={t.title} $active={t.active}>
                {t.icon && logos[t.icon]}
                <TabTitle $bare={!t.icon}>{t.title}</TabTitle>
                <IconButton $color="#fbfbfe" aria-label="Close tab"><Icon name="close" size={22} weight={1.9} /></IconButton>
              </Tab>
            ))}
          </Tabs>
          <TabActions>
            <IconButton aria-label="New tab"><Icon name="plus" size={24} /></IconButton>
            <IconButton aria-label="List all tabs"><Icon name="chevron" size={24} /></IconButton>
          </TabActions>
        </TabStrip>

        <Toolbar>
          <IconButton aria-label="Back"><Icon name="back" size={26} /></IconButton>
          <IconButton aria-label="Forward" $color="#79787f"><Icon name="forward" size={26} /></IconButton>
          <IconButton aria-label="Reload"><Icon name="reload" size={26} /></IconButton>
          <Spring />
          <UrlBar>
            <Icon name="shield" size={27} />
            <Icon name="lock" size={26} />
            <UrlInput aria-label="Address" defaultValue="https://trello.com/b/wzoUYlVk/group-software-project" />
            <Icon name="star" size={27} />
          </UrlBar>
          <Spring />
          <IconButton aria-label="Pocket"><Icon name="pocket" size={26} /></IconButton>
          <IconButton aria-label="Downloads"><Icon name="download" size={26} /></IconButton>
          <IconButton aria-label="Account"><AccountDot>M</AccountDot></IconButton>
          <IconButton aria-label="Extensions"><Icon name="puzzle" size={26} /></IconButton>
          <MenuButton aria-label="Menu"><Icon name="menu" size={26} /></MenuButton>
        </Toolbar>

        <Bookmarks>
          {bookmarks.map(([icon, name], i) => (
            <Bookmark key={i} href="#">{logos[icon]}{name}</Bookmark>
          ))}
        </Bookmarks>

        <AppHeader>
          <IconButton aria-label="Switch apps">
            <svg width="22" height="22" viewBox="0 0 22 22" fill="currentColor">
              {[0, 8, 16].map((y) => [0, 8, 16].map((x) => (
                <rect key={`${x}-${y}`} x={x} y={y} width="6" height="6" rx="1.200" />
              )))}
            </svg>
          </IconButton>
          <Brand href="#">
            <svg width="25" height="25" viewBox="0 0 25 25" aria-hidden="true">
              <path fill="currentColor" fillRule="evenodd" d="M3 0h19a3 3 0 0 1 3 3v19a3 3 0 0 1-3 3H3a3 3 0 0 1-3-3V3a3 3 0 0 1 3-3zM6 4.500A1.500 1.500 0 0 0 4.500 6v11.500A1.500 1.500 0 0 0 6 19h3.500a1.500 1.500 0 0 0 1.500-1.500V6a1.500 1.500 0 0 0-1.500-1.500zM15.500 4.500A1.500 1.500 0 0 0 14 6v6.500a1.500 1.500 0 0 0 1.500 1.500H19a1.500 1.500 0 0 0 1.500-1.500V6A1.500 1.500 0 0 0 19 4.500z" />
            </svg>
            Trello
          </Brand>
          <HeaderNav>
            {["Workspaces", "Recent", "Starred", "Templates"].map((name) => (
              <NavButton key={name}>{name}<Icon name="chevron" size={20} weight={2.2} /></NavButton>
            ))}
          </HeaderNav>
          <CreateButton>Create</CreateButton>
          <SearchBox>
            <Icon name="search" size={22} weight={2} />
            <SearchInput type="search" placeholder="Search" aria-label="Search" />
          </SearchBox>
          <BellButton aria-label="Notifications"><Icon name="bell" size={27} weight={2.4} /></BellButton>
          <HelpButton aria-label="Help"><Icon name="help" size={27} weight={2.2} /></HelpButton>
          <Avatar $who="LM">LM</Avatar>
        </AppHeader>

        <Workspace>
          <Rail>
            <RailToggle aria-label="Expand sidebar"><Icon name="chevronRight" size={17} weight={3.4} /></RailToggle>
          </Rail>
          <Board>
            <BoardHeader>
              <BoardTitle>Group Software Project</BoardTitle>
              <TitleTools>
                <IconButton aria-label="Star board"><Icon name="star" size={24} weight={2.1} /></IconButton>
                <IconButton aria-label="Visibility"><Icon name="people" size={24} weight={2.1} /></IconButton>
              </TitleTools>
              <SolidButton $gap={12}><Icon name="board" size={24} weight={1.900} />Board</SolidButton>
              <IconButton aria-label="Board views"><Icon name="chevron" size={24} weight={2.6} /></IconButton>
              <HeaderTools>
                <IconButton aria-label="Power-Ups"><Icon name="rocket" size={24} weight={2.2} /></IconButton>
                <IconButton aria-label="Automation"><Icon name="bolt" size={22} /></IconButton>
                <FilterButton><Icon name="filter" size={22} weight={2.4} />Filters</FilterButton>
              </HeaderTools>
              <Divider />
              <Members>
                {["LM", "AO", "AT", "BC", "CW"].map((m) => (
                  <Avatar key={m} $who={m} $large>
                    {m}
                    {m === "AO" && (
                      <AdminMark width="16" height="14" viewBox="0 0 16 14" aria-hidden="true">
                        <path d="M8 0l7 4.500c.6.400 1 1 1 1.700V14H0V6.200c0-.7.400-1.300 1-1.700z" fill="#e6e8f0" />
                        <path d="M3 7.500L8 4l5 3.500M3 12l5-3.500 5 3.500" fill="none" stroke="#1b1a9c" strokeWidth="1.700" />
                      </AdminMark>
                    )}
                  </Avatar>
                ))}
                <MoreMembers>+2</MoreMembers>
              </Members>
              <SolidButton $gap={8}><Icon name="personAdd" size={22} weight={2.1} />Share</SolidButton>
              <IconButton aria-label="Board menu"><Icon name="dots" size={25} /></IconButton>
            </BoardHeader>
            <Lists>
              <BoardList cut />
              {lists.map((l) => <BoardList key={l.title} {...l} />)}
              <AddList aria-label="Add another list"><Icon name="plus" size={22} weight={2.1} /></AddList>
            </Lists>
          </Board>
        </Workspace>
      </Window>
    </Desktop>
  );
}
